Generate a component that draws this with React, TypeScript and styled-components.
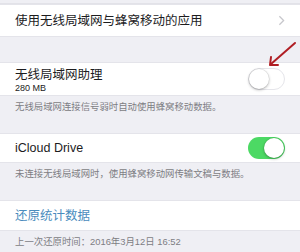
import React from 'react'
import styled, { createGlobalStyle } from 'styled-components'

const GlobalStyle = createGlobalStyle`
  html, body {
    margin: 0;
    padding: 0;
    background: #efeff4;
  }
  body {
    font-family: 'Liberation Sans', 'Noto Sans CJK SC', sans-serif;
    -webkit-font-smoothing: antialiased;
  }
`

const App = () => {
  return (
    <>
      <GlobalStyle />
      <Page>
        <TopGap />
        <Cell $height={33}>
          <Title>使用无线局域网与蜂窝移动的应用</Title>
          <Chevron viewBox="0 0 8 13">
            <path d="M1.5 1.5 L6.5 6.5 L1.5 11.5" fill="none" stroke="#c7c7cc" strokeWidth="1.5" />
          </Chevron>
        </Cell>
        <Gap $height={25} />
        <Cell $height={34}>
          <TitleGroup>
            <Title>无线局域网助理</Title>
            <Sub>280 MB</Sub>
          </TitleGroup>
          <Toggle $on={false} />
        </Cell>
        <Footer $height={37}>无线局域网连接信号弱时自动使用蜂窝移动数据。</Footer>
        <Cell $height={30}>
          <Title>iCloud Drive</Title>
          <Toggle $on />
        </Cell>
        <Footer $height={37}>未连接无线局域网时，使用蜂窝移动网传输文稿与数据。</Footer>
        <Cell $height={31}>
          <Title $link>还原统计数据</Title>
        </Cell>
        <Footer $height={22} $top={4}>上一次还原时间：2016年3月12日 16:52</Footer>
        <Arrow viewBox="0 0 32 28">
          <line x1="29" y1="3" x2="5" y2="24" stroke="#b01e24" strokeWidth="2" strokeLinecap="round" />
          <path d="M4 25 L5 17 M4 25 L12 25" stroke="#b01e24" strokeWidth="2" strokeLinecap="round" strokeLinejoin="round" fill="none" />
        </Arrow>
      </Page>
    </>
  )
}

export default App

// Styles
const Page = styled.div`
  position: relative;
  width: 300px;
  height: 252px;
  overflow: hidden;
  background: #efeff4;
  display: flex;
  flex-direction: column;
`

const TopGap = styled.div`
  height: 3px;
  flex-shrink: 0;
  border-bottom: 1px solid #e2e2e8;
`

const Gap = styled.div<{ $height: number }>`
  height: ${p => p.$height}px;
  flex-shrink: 0;
`

const Cell = styled.div<{ $height: number }>`
  height: ${p => p.$height}px;
  flex-shrink: 0;
  box-sizing: border-box;
  background: #fff;
  display: flex;
  align-items: center;
  justify-content: space-between;
  padding: 0 13px 0 15px;
  border-top: 1px solid #e4e4ea;
  border-bottom: 1px solid #e4e4ea;
`

const TitleGroup = styled.div`
  display: flex;
  flex-direction: column;
  padding-top: 1px;
`

const Title = styled.span<{ $link?: boolean }>`
  font-size: 12.5px;
  line-height: 16px;
  color: ${p => (p.$link ? '#4a8cbd' : '#1c1c1e')};
  font-family: 'Liberation Sans', 'Noto Sans CJK SC', sans-serif;
`

const Sub = styled.span`
  font-size: 9px;
  line-height: 10px;
  color: #222;
`

const Chevron = styled.svg`
  width: 7px;
  height: 11px;
  margin-right: 2px;
`

const Toggle = styled.div<{ $on: boolean }>`
  position: relative;
  width: 37px;
  height: 22px;
  border-radius: 11px;
  box-sizing: border-box;
  background: ${p => (p.$on ? '#4cd964' : '#fff')};
  border: ${p => (p.$on ? 'none' : '1.5px solid #e5e5ea')};
  margin-right: 2px;

  &::after {
    content: '';
    position: absolute;
    top: ${p => (p.$on ? 1 : -0.5)}px;
    ${p => (p.$on ? 'right: 1px;' : 'left: -0.5px;')}
    width: 20px;
    height: 20px;
    border-radius: 50%;
    background: #fff;
    box-shadow: 0 1px 3px rgba(0, 0, 0, 0.3), 0 0 0 0.5px rgba(0, 0, 0, 0.08);
  }
`

const Footer = styled.div<{ $height: number; $top?: number }>`
  height: ${p => p.$height}px;
  flex-shrink: 0;
  box-sizing: border-box;
  padding: ${p => p.$top ?? 4}px 15px 0;
  font-size: 9.4px;
  line-height: 14px;
  color: #7d7d83;
  font-family: 'Liberation Sans', 'Noto Sans CJK SC', sans-serif;
`

const Arrow = styled.svg`
  position: absolute;
  left: 266px;
  top: 40px;
  width: 32px;
  height: 28px;
`
